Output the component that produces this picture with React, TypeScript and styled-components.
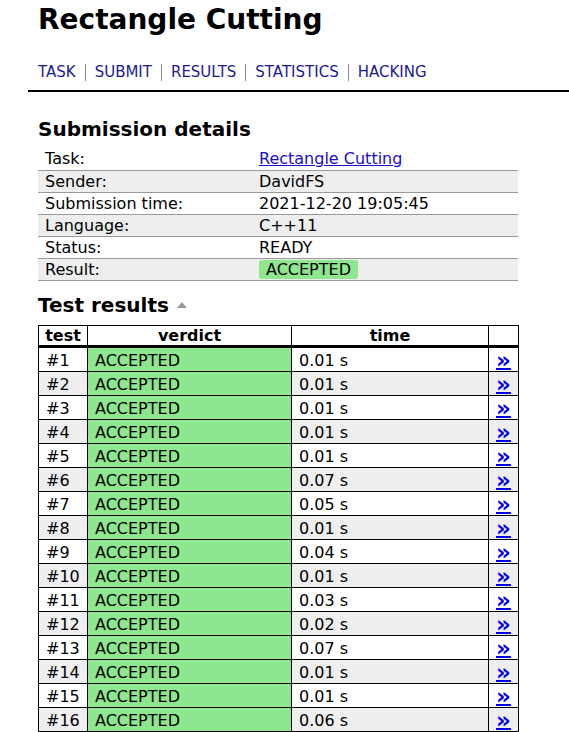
import styled, { createGlobalStyle } from "styled-components"

const GlobalStyle = createGlobalStyle`
  body {
    margin: 0;
    background: #fff;
    color: #000;
    font-family: "DejaVu Sans", Verdana, sans-serif;
  }
`

const navItems = ["TASK", "SUBMIT", "RESULTS", "STATISTICS", "HACKING"]

const details: [string, string][] = [
    ["Task:", "Rectangle Cutting"],
    ["Sender:", "DavidFS"],
    ["Submission time:", "2021-12-20 19:05:45"],
    ["Language:", "C++11"],
    ["Status:", "READY"],
    ["Result:", "ACCEPTED"],
]

const times = ["0.01", "0.01", "0.01", "0.01", "0.01", "0.07", "0.05", "0.01", "0.04", "0.01", "0.03", "0.02", "0.07", "0.01", "0.01", "0.06"]

const App = () => {
    return <Page>
        <GlobalStyle />
        <Header>
            <Title>Rectangle Cutting</Title>
            <Nav>
                {navItems.map(item => (
                    <NavLink key={item} href="#">{item}</NavLink>
                ))}
            </Nav>
        </Header>
        <Content>
            <SectionTitle>Submission details</SectionTitle>
            <DetailsTable>
                <tbody>
                    {details.map(([label, value], i) => (
                        <DetailRow key={label} $odd={i % 2 === 1}>
                            <LabelCell>{label}</LabelCell>
                            <ValueCell>
                                {label === "Task:" && <TaskLink href="#">{value}</TaskLink>}
                                {label === "Result:" && <Badge>{value}</Badge>}
                                {label !== "Task:" && label !== "Result:" && value}
                            </ValueCell>
                        </DetailRow>
                    ))}
                </tbody>
            </DetailsTable>
            <SectionTitle $gap>
                Test results <SortArrow />
            </SectionTitle>
            <ResultsTable>
                <colgroup>
                    <col style={{ width: 49 }} />
                    <col style={{ width: 204 }} />
                    <col style={{ width: 197 }} />
                    <col />
                </colgroup>
                <thead>
                    <tr>
                        <HeadCell>test</HeadCell>
                        <HeadCell>verdict</HeadCell>
                        <HeadCell>time</HeadCell>
                        <HeadCell></HeadCell>
                    </tr>
                </thead>
                <tbody>
                    {times.map((t, i) => (
                        <ResultRow key={i} $odd={i % 2 === 1}>
                            <Cell>#{i + 1}</Cell>
                            <VerdictCell>ACCEPTED</VerdictCell>
                            <Cell>{t} s</Cell>
                            <LinkCell><ViewLink href="#">»</ViewLink></LinkCell>
                        </ResultRow>
                    ))}
                </tbody>
            </ResultsTable>
        </Content>
    </Page>
}

const Page = styled.div`
    width: 569px;
    overflow: hidden;
`

const Header = styled.div`
    margin-left: 28px;
    padding-left: 10px;
    border-bottom: 2px solid #000;
    padding-bottom: 9px;
`

const Title = styled.h1`
    margin: 0;
    padding-top: 3px;
    font-size: 28px;
    line-height: 34px;
    font-weight: bold;
`

const Nav = styled.div`
    display: flex;
    margin-top: 27px;
    font-size: 15px;
    line-height: 17px;
`

const NavLink = styled.a`
    color: #1a1a99;
    text-decoration: none;
    padding: 0 9px;
    border-left: 1px solid #888;
    &:first-child {
        padding-left: 0;
        border-left: none;
    }
`

const Content = styled.div`
    padding-left: 38px;
    width: 480px;
`

const SectionTitle = styled.h2<{ $gap?: boolean }>`
    margin: ${p => p.$gap ? "12px" : "25px"} 0 ${p => p.$gap ? "8px" : "7px"};
    font-size: 20px;
    line-height: 24px;
    font-weight: bold;
    display: flex;
    align-items: center;
    gap: 8px;
`

const SortArrow = styled.span`
    width: 0;
    height: 0;
    border-left: 5px solid transparent;
    border-right: 5px solid transparent;
    border-bottom: 6px solid #999;
`

const DetailsTable = styled.table`
    width: 480px;
    border-collapse: collapse;
    font-size: 16px;
`

const DetailRow = styled.tr<{ $odd: boolean }>`
    background: ${p => p.$odd ? "#eee" : "#fff"};
    border-bottom: 1px solid #999;
    height: 22px;
`

const LabelCell = styled.td`
    width: 214px;
    padding: 0 0 0 7px;
    line-height: 21px;
`

const ValueCell = styled.td`
    padding: 0;
    line-height: 21px;
`

const TaskLink = styled.a`
    color: #1a0dcc;
`

const Badge = styled.span`
    background: #8ee68e;
    border-radius: 3px;
    padding: 0 7px;
`

const ResultsTable = styled.table`
    width: 481px;
    border-collapse: collapse;
    font-size: 16px;
    table-layout: fixed;
`

const HeadCell = styled.th`
    border: 1px solid #000;
    border-bottom: 3px solid #000;
    height: 19px;
    padding: 0;
    line-height: 19px;
    font-weight: bold;
    text-align: center;
`

const ResultRow = styled.tr<{ $odd: boolean }>`
    background: ${p => p.$odd ? "#eee" : "#fff"};
    height: 24px;
`

const Cell = styled.td`
    border: 1px solid #000;
    padding: 2px 7px 0;
    line-height: 21px;
    height: 21px;
`

const VerdictCell = styled(Cell)`
    background: #8ee68e;
`

const LinkCell = styled(Cell)`
    text-align: center;
    padding: 0;
`

const ViewLink = styled.a`
    color: #0000ee;
    font-weight: bold;
    font-size: 23px;
    line-height: 18px;
    display: inline-block;
    height: 18px;
    vertical-align: top;
    margin-top: 2px;
    text-underline-offset: 0px;
`

export default App
